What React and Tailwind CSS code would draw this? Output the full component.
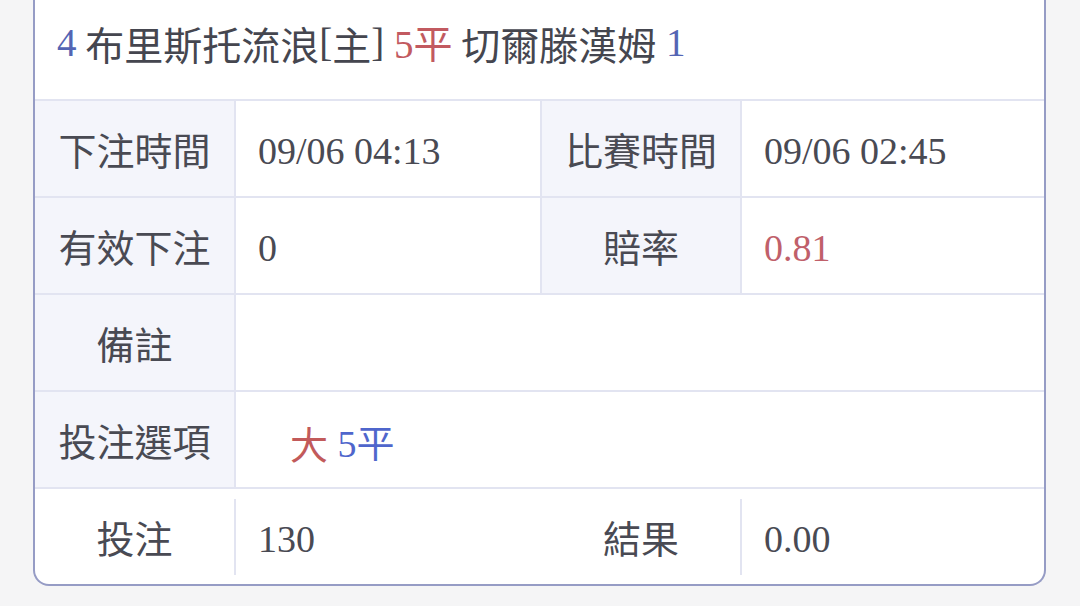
import React from "react";

const LBL = "font-['Noto_Sans_CJK_TC','Noto_Sans_CJK_SC',sans-serif]";
const VAL = "font-['Liberation_Serif','Noto_Sans_CJK_TC',serif]";

function Label({ children, w, last }) {
  return (
    <div
      className={`${w} shrink-0 h-full flex items-center justify-center ${LBL} text-[38px] text-[#494a53] ${
        last ? "" : "bg-[#f4f5fb] border-r-2 border-[#e2e4f1]"
      }`}
    >
      {children}
    </div>
  );
}

function Value({ children, w, border, cls = "" }) {
  return (
    <div
      className={`${w} shrink-0 h-full flex items-center pl-[22px] pt-[5px] ${VAL} text-[38px] text-[#494a53] ${
        border ? "border-r-2 border-[#e2e4f1]" : ""
      } ${cls}`}
    >
      {children}
    </div>
  );
}

function Row({ children }) {
  return (
    <div className="h-[97px] flex border-t-2 border-[#e2e4f1]">{children}</div>
  );
}

export default function App() {
  return (
    <div className="w-[1080px] h-[606px] bg-[#f5f5f6] overflow-hidden">
      <div className="ml-[33px] w-[1013px] bg-white border-x-2 border-b-2 border-[#969cc5] rounded-b-[16px] overflow-hidden">
        <div className={`h-[99px] flex items-center pl-[22px] pb-[12px] text-[39px] text-[#45464f] font-['Liberation_Serif','Noto_Sans_CJK_TC',serif]`}>
          <span className="text-[#5465b4]">4</span>
          <span className="font-['Noto_Sans_CJK_TC',sans-serif]">&nbsp;布里斯托流浪</span>
          <span>[</span>
          <span className="font-['Noto_Sans_CJK_TC',sans-serif]">主</span>
          <span>]</span>
          <span className="text-[#c25a60]">&nbsp;5<span className="font-['Noto_Sans_CJK_TC',sans-serif]">平</span></span>
          <span className="font-['Noto_Sans_CJK_TC',sans-serif]">&nbsp;切爾滕漢姆</span>
          <span className="text-[#5465b4]">&nbsp;1</span>
        </div>

        <Row>
          <Label w="w-[201px]">下注時間</Label>
          <Value w="w-[306px]" border>09/06 04:13</Value>
          <Label w="w-[200px]">比賽時間</Label>
          <Value w="flex-1">09/06 02:45</Value>
        </Row>
        <Row>
          <Label w="w-[201px]">有效下注</Label>
          <Value w="w-[306px]" border>0</Value>
          <Label w="w-[200px]">賠率</Label>
          <Value w="flex-1" cls="text-[#c0606a]">0.81</Value>
        </Row>
        <Row>
          <Label w="w-[201px]">備註</Label>
          <Value w="flex-1"></Value>
        </Row>
        <Row>
          <Label w="w-[201px]">投注選項</Label>
          <Value w="flex-1" cls="pl-[54px]">
            <span className="text-[#c25a5a] font-['Noto_Sans_CJK_TC',sans-serif]">大</span>
            <span className="text-[#4f66cc]">
              &nbsp;5<span className="font-['Noto_Sans_CJK_TC',sans-serif]">平</span>
            </span>
          </Value>
        </Row>
        <div className="h-[97px] flex items-center border-t-2 border-[#e2e4f1]">
          <Label w="w-[199px]" last>投注</Label>
          <div className="w-[2px] h-[76px] bg-[#e2e4f1]" />
          <Value w="w-[306px]">130</Value>
          <Label w="w-[198px]" last>結果</Label>
          <div className="w-[2px] h-[76px] bg-[#e2e4f1]" />
          <Value w="flex-1">0.00</Value>
        </div>
      </div>
    </div>
  );
}
